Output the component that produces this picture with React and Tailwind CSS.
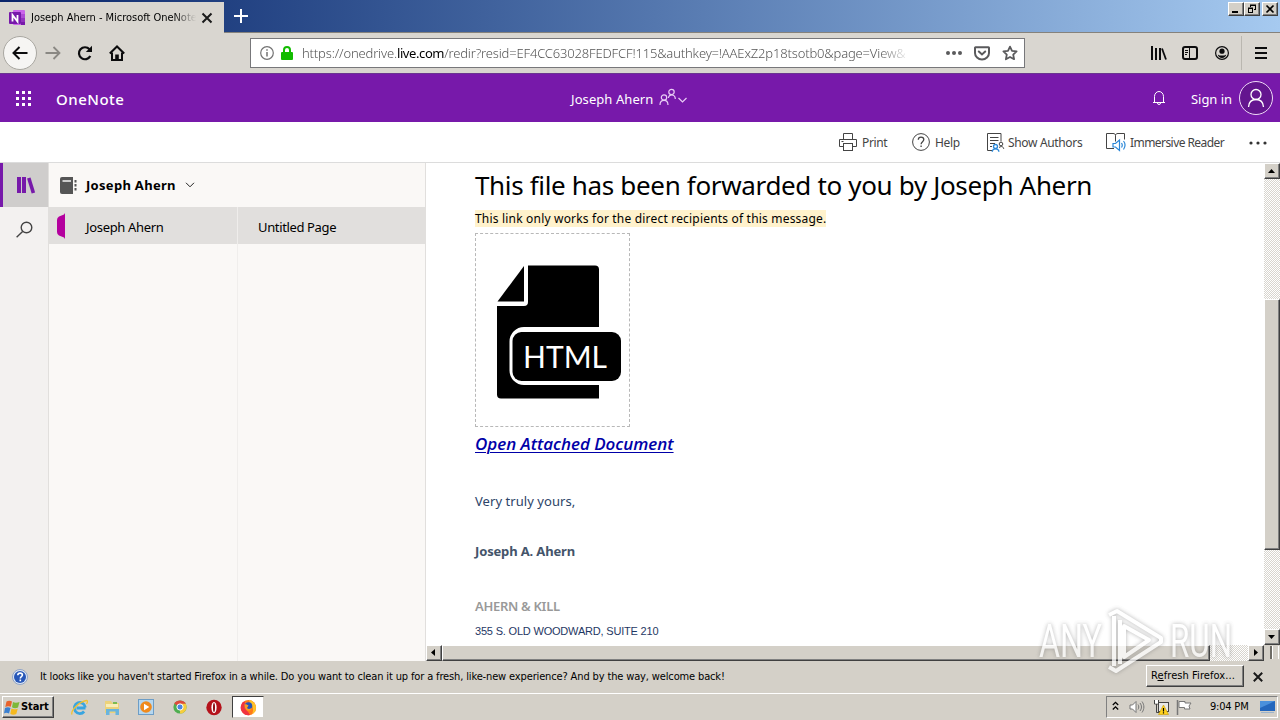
import clsx from "clsx";

const tahoma = "font-['DejaVu_Sans_Condensed','DejaVu_Sans','Noto_Sans',sans-serif]";
const segoe = "font-['Noto_Sans',sans-serif]";

const raised =
  "bg-[#d4d0c8] border border-t-white border-l-white border-r-[#404040] border-b-[#404040] shadow-[inset_-1px_-1px_0_#808080]";
const track =
  "bg-[repeating-conic-gradient(#ffffff_0%_25%,#d8d5ce_0%_50%)] bg-[length:2px_2px]";

function Label({ children, className }) {
  return <span className={clsx("block shrink-0 whitespace-nowrap", className)}>{children}</span>;
}

function Svg({ w, h, className, children }) {
  return (
    <svg
      width={w}
      height={h}
      viewBox={`0 0 ${w} ${h}`}
      fill="none"
      className={clsx("block shrink-0", className)}
    >
      {children}
    </svg>
  );
}

/* ---------- Browser chrome ---------- */

function OneNoteLogo() {
  return (
    <Svg w={17} h={16}>
      <rect x="4" y="0" width="12" height="15" rx="1" fill="#ca64ea" />
      <rect x="12" y="4" width="4" height="4" fill="#ae4bd5" />
      <rect x="12" y="8" width="4" height="4" fill="#9332bf" />
      <rect x="12" y="12" width="4" height="3" fill="#7719aa" />
      <rect x="0" y="2" width="12" height="12" rx="1" fill="#7719aa" />
      <path d="M3.500 11.500V5L8.500 11.500V5" stroke="#fff" strokeWidth="1.800" />
    </Svg>
  );
}

function WindowButtons() {
  return (
    <div className="flex pt-[2px] pr-[2px]">
      <div className={clsx("w-4 h-[14px]", raised)}>
        <Svg w={14} h={12}>
          <path d="M3 9h6" stroke="#000" strokeWidth="2" />
        </Svg>
      </div>
      <div className={clsx("w-4 h-[14px]", raised)}>
        <Svg w={14} h={12}>
          <path d="M5 2h6M5 2.500h6M5.500 2v2M10.500 2v5M9 6.500h2" stroke="#000" />
          <path d="M3 5.500h5M3 5h5M3.500 5v5M7.500 5v5M3 9.500h5" stroke="#000" />
        </Svg>
      </div>
      <div className={clsx("w-4 h-[14px] ml-[2px]", raised)}>
        <Svg w={14} h={12}>
          <path d="M3.500 2.500l7 7M10.500 2.500l-7 7" stroke="#000" strokeWidth="1.700" />
        </Svg>
      </div>
    </div>
  );
}

function TitleBar() {
  return (
    <div className="h-8 shrink-0 flex bg-linear-to-r from-[#0a246a] to-[#a6caf0]">
      <div className="w-[224px] h-[31px] mt-[2px] bg-[#d9d6d0] flex items-center pl-[9px] relative z-10">
        <OneNoteLogo />
        <div className="ml-[5px] w-[165px] overflow-hidden mask-[linear-gradient(to_right,#000_86%,transparent)]">
          <Label className={clsx(tahoma, "text-[11px] leading-4 text-black tracking-[-0.03px]")}>
            Joseph Ahern - Microsoft OneNote
          </Label>
        </div>
        <Svg w={12} h={12} className="ml-[5px]">
          <path d="M1.500 1.500l9 9M10.500 1.500l-9 9" stroke="#1a1a1a" strokeWidth="2" />
        </Svg>
      </div>
      <Svg w={14} h={14} className="ml-[10px] mt-[9px]">
        <path d="M7 0v14M0 7h14" stroke="#fff" strokeWidth="2" />
      </Svg>
      <div className="flex-1" />
      <WindowButtons />
    </div>
  );
}

function NavBar() {
  return (
    <div className="h-[41px] shrink-0 flex items-center bg-[#d9d6d0] border-t border-[#85827c]">
      <div className="ml-[3px] size-[34px] shrink-0 rounded-full bg-[#f6f5f3] border border-[#a9a7a1] flex items-center justify-center">
        <Svg w={16} h={14}>
          <path d="M15.500 7H2M7.500 1L1.500 7l6 6" stroke="#0c0c0d" strokeWidth="2" />
        </Svg>
      </div>
      <Svg w={16} h={14} className="ml-2">
        <path d="M.5 7H14M8.500 1l6 6-6 6" stroke="#8a8883" strokeWidth="1.800" />
      </Svg>
      <Svg w={16} h={16} className="ml-4">
        <path d="M13.300 11A6 6 0 1 1 12.500 4.300" stroke="#0c0c0d" strokeWidth="2.200" />
        <path d="M15 .8V7H8.800z" fill="#0c0c0d" />
      </Svg>
      <Svg w={16} h={16} className="ml-4">
        <path d="M.8 8.500L8 1.500l7.200 7" stroke="#0c0c0d" strokeWidth="2" />
        <path d="M3 7.500V15h10V7.500" stroke="#0c0c0d" strokeWidth="2" />
        <path d="M6.200 15V9.500h3.600V15z" fill="#0c0c0d" />
      </Svg>

      <div className="ml-[125px] w-[775px] h-[30px] shrink-0 bg-white border border-[#77777a] flex items-center">
        <Svg w={14} h={14} className="ml-[9px]">
          <circle cx="7" cy="7" r="6.300" stroke="#737373" strokeWidth="1.200" />
          <path d="M7 6v4.500M7 3.300v1.500" stroke="#737373" strokeWidth="1.500" />
        </Svg>
        <Svg w={12} h={14} className="ml-[7px]">
          <path d="M3 6V4a3 3 0 0 1 6 0v2" stroke="#12bc00" strokeWidth="2" />
          <rect x="0" y="6" width="12" height="8" rx="1" fill="#12bc00" />
        </Svg>
        <div className="ml-[9px] w-[608px] overflow-hidden mask-[linear-gradient(to_right,#000_95%,transparent)]">
          <Label className={clsx(segoe, "text-[13px] leading-5 font-light text-[#555] tracking-[-0.16px]")}>
            https://onedrive.
            <span className="text-black font-normal tracking-[-0.4px]">live.com</span>
            /redir?resid=EF4CC63028FEDFCF!115&amp;authkey=!AAExZ2p18tsotb0&amp;page=View&amp;
          </Label>
        </div>
        <Svg w={16} h={4} className="ml-[36px]">
          <circle cx="2" cy="2" r="2" fill="#5a5a5c" />
          <circle cx="8" cy="2" r="2" fill="#5a5a5c" />
          <circle cx="14" cy="2" r="2" fill="#5a5a5c" />
        </Svg>
        <Svg w={16} h={15} className="ml-3">
          <path d="M1.500 1.200h13a.5.500 0 0 1 .5.500V7a7 6.500 0 0 1-14 0V1.700a.5.500 0 0 1 .5-.5z" stroke="#5a5a5c" strokeWidth="2" />
          <path d="M4.800 5.500L8 8.500l3.200-3" stroke="#5a5a5c" strokeWidth="2" strokeLinecap="round" />
        </Svg>
        <Svg w={16} h={16} className="ml-3">
          <path d="M8 1.600l2 4.200 4.600.6-3.400 3.200.9 4.600L8 12l-4.100 2.200.9-4.600L1.400 6.400 6 5.800z" stroke="#5a5a5c" strokeWidth="1.800" strokeLinejoin="round" />
        </Svg>
      </div>

      <Svg w={16} h={14} className="ml-[126px]">
        <path d="M1 0v14M5 2v12M9 2v12" stroke="#0c0c0d" strokeWidth="2" />
        <path d="M11 2.500l4 11" stroke="#0c0c0d" strokeWidth="1.800" />
      </Svg>
      <Svg w={16} h={14} className="ml-[15px]">
        <rect x="1" y="1" width="14" height="12" rx="2" stroke="#0c0c0d" strokeWidth="2" />
        <path d="M7.500 1v12M3 4.500h3M3 6.500h3M3 8.500h2" stroke="#0c0c0d" />
      </Svg>
      <Svg w={14} h={14} className="ml-[17px]">
        <circle cx="7" cy="7" r="6.400" stroke="#0c0c0d" strokeWidth="1.200" />
        <circle cx="7" cy="5.200" r="2.600" fill="#0c0c0d" />
        <path d="M2.800 8.500c1 1 2.500 1 4.200 1s3.200 0 4.200-1c-.3 2-2 3.500-4.200 3.500s-3.900-1.500-4.200-3.500z" fill="#0c0c0d" />
      </Svg>
      <div className="w-px h-[34px] ml-3 bg-[#bab7b0]" />
      <Svg w={12} h={12} className="ml-[13px]">
        <path d="M0 1h12M0 6h12M0 11h12" stroke="#0c0c0d" strokeWidth="2" />
      </Svg>
    </div>
  );
}

/* ---------- OneNote ---------- */

function AppHeader() {
  return (
    <header className={clsx(segoe, "h-[49px] shrink-0 flex items-center bg-[#7719aa] border-t border-[#6a3590] text-white")}>
      <div className="ml-4 w-[15px] grid grid-cols-3 gap-[3px]">
        {Array.from({ length: 9 }, (_, i) => (
          <span key={i} className="size-[3px] bg-white" />
        ))}
      </div>
      <Label className="ml-[25px] mt-[2px] w-[100px] text-[15px] leading-5 font-medium tracking-[0.5px]">OneNote</Label>
      <Label className="ml-[415px] mt-[2px] w-[84px] text-[13px] leading-5 tracking-[0.08px]">Joseph Ahern</Label>
      <Svg w={28} h={18} className="ml-[4px] -mt-[3px]">
        <circle cx="5" cy="9.500" r="2.700" stroke="#e9cdf5" strokeWidth="1.200" />
        <path d="M1 17c0-3 1.500-4.600 4-4.600S9 14 9 17" stroke="#e9cdf5" strokeWidth="1.200" />
        <circle cx="12.500" cy="4" r="2.700" stroke="#e9cdf5" strokeWidth="1.200" />
        <path d="M9.300 10c.4-2 1.500-3 3.200-3 2.300 0 3.800 1.500 3.800 4" stroke="#e9cdf5" strokeWidth="1.200" />
        <path d="M19.500 10l4 4 4-4" stroke="#e9cdf5" strokeWidth="1.200" />
      </Svg>
      <Svg w={14} h={16} className="ml-[465px]">
        <path d="M1 12.500h12M2.500 12.500V6.500a4.500 5 0 0 1 9 0v6M5.500 13a1.500 1.500 0 0 0 3 0" stroke="#fff" />
      </Svg>
      <Label className="ml-[25px] mt-[2px] w-[48px] text-[13px] leading-5 tracking-[-0.05px]">Sign in</Label>
      <div className="size-[34px] shrink-0 rounded-full border border-[#efd9f7] bg-[#64158f] flex items-center justify-center">
        <Svg w={18} h={20}>
          <circle cx="9" cy="6.500" r="5" stroke="#fff" strokeWidth="1.300" />
          <path d="M1.500 19c.3-4.500 3-7.500 7.500-7.500s7.200 3 7.500 7.500" stroke="#fff" strokeWidth="1.300" />
        </Svg>
      </div>
    </header>
  );
}

function Toolbar() {
  const text = "mt-[2px] text-[12px] leading-5 text-[#444]";
  return (
    <div className={clsx(segoe, "h-[41px] shrink-0 flex items-center bg-white border-b border-[#dcdcdc]")}>
      <Svg w={18} h={18} className="ml-[839px]">
        <path d="M4.500 6V.5h9V6M4.500 13.500h-4V6.500h17v7h-4" stroke="#444" />
        <rect x="4.500" y="10.500" width="9" height="7" stroke="#444" />
        <path d="M2.500 8.500h2" stroke="#444" />
      </Svg>
      <Label className={clsx("ml-[5px] w-[50px] tracking-[-0.35px]", text)}>Print</Label>
      <Svg w={18} h={18}>
        <circle cx="9" cy="9" r="8.400" stroke="#444" />
        <path d="M6.300 6.800c0-1.600 1.100-2.700 2.700-2.700s2.800 1 2.800 2.500c0 2-2.700 2.200-2.700 4.700M9.100 12.500v1.600" stroke="#444" strokeWidth="1.300" />
      </Svg>
      <Label className={clsx("ml-[5px] w-[52px] tracking-[-0.3px]", text)}>Help</Label>
      <Svg w={18} h={19}>
        <path d="M5 17.500H.5V.5h13.500v8" stroke="#444" />
        <path d="M3 4.500h8.500M3 7.500h8.500M3 10.500h5M3 13.500h2" stroke="#444" />
        <circle cx="14" cy="11" r="1.800" stroke="#444" />
        <path d="M12 14.500c3-2 4.500-.5 4.700 1.500" stroke="#444" />
        <circle cx="8.500" cy="13.500" r="2" stroke="#2b88d8" strokeWidth="1.300" />
        <path d="M5.200 18.800c.2-4 6.500-4 6.700 0" stroke="#2b88d8" strokeWidth="1.300" />
      </Svg>
      <Label className={clsx("ml-[3px] w-[98px] tracking-[-0.34px]", text)}>Show Authors</Label>
      <Svg w={21} h={20}>
        <path d="M8 16.500H.5V1.500h6.500c1.500 0 2.500.6 2.500 2v6M9.500 3.500c0-1.400 1-2 2.500-2h6.500v6" stroke="#444" />
        <path d="M7 11.500h2.500l4-3.500v10.500l-4-3.500H7z" fill="#fff" stroke="#2b88d8" strokeWidth="1.200" />
        <path d="M15.500 11c1 1.500 1 3 0 4.500M17.500 9c2 2.500 2 5.500 0 8.500" stroke="#2b88d8" strokeWidth="1.200" />
      </Svg>
      <Label className={clsx("ml-[3px] w-[119px] tracking-[-0.56px]", text)}>Immersive Reader</Label>
      <Svg w={18} h={4} className="mt-[2px]">
        <circle cx="2" cy="2" r="1.600" fill="#333" />
        <circle cx="9" cy="2" r="1.600" fill="#333" />
        <circle cx="16" cy="2" r="1.600" fill="#333" />
      </Svg>
    </div>
  );
}

function Rail() {
  return (
    <nav className="w-[49px] shrink-0 bg-[#f3f1f0] border-r border-[#e1dfdd]">
      <div className="h-11 bg-[#cfcdcc] border-l-[3px] border-[#7719aa] flex items-center pl-[14px]">
        <Svg w={19} h={17}>
          <path d="M2 0v16M7 0v16" stroke="#7719aa" strokeWidth="4" />
          <path d="M11.800 1l4.600 15" stroke="#7719aa" strokeWidth="3.600" />
        </Svg>
      </div>
      <Svg w={17} h={17} className="ml-4 mt-[14px]">
        <circle cx="10.500" cy="6.500" r="5.300" stroke="#444" strokeWidth="1.400" />
        <path d="M6.600 10.400L.6 16.300" stroke="#444" strokeWidth="1.400" />
      </Svg>
    </nav>
  );
}

function NotebookPane() {
  return (
    <aside className={clsx(segoe, "w-[377px] shrink-0 flex flex-col bg-[#faf8f6] border-r border-[#e1dfdd] text-black")}>
      <div className="h-11 shrink-0 flex items-center pl-[11px]">
        <Svg w={17} h={17}>
          <path d="M2 0h11v17H2a2 2 0 0 1-2-2V2a2 2 0 0 1 2-2z" fill="#555" />
          <path d="M2.500 4h8.500" stroke="#fff" strokeWidth="1.400" />
          <path d="M15.500 3v12" stroke="#555" strokeWidth="2" strokeDasharray="2.500 1.500" />
        </Svg>
        <Label className="ml-[9px] w-[99px] text-[13px] leading-5 font-bold tracking-[0.3px]">Joseph Ahern</Label>
        <Svg w={10} h={6}>
          <path d="M1 .8l4 4 4-4" stroke="#222" />
        </Svg>
      </div>
      <div className="h-[37px] shrink-0 flex items-center bg-[#e1dfdd]">
        <div className="w-[189px] h-full flex items-center border-r border-[#efedeb] pl-2">
          <Svg w={8} h={26}>
            <path d="M8 0v26L7 24.500L2 22.500Q0 21.500 0 19V7Q0 4.500 2 3.500L7 1.500z" fill="#b4009e" />
          </Svg>
          <Label className="ml-[21px] mt-[2px] text-[13px] leading-5 tracking-[-0.33px]">Joseph Ahern</Label>
        </div>
        <Label className="ml-5 mt-[2px] text-[13px] leading-5 tracking-[-0.36px]">Untitled Page</Label>
      </div>
      <div className="flex-1 w-[189px] border-r border-[#f0eeec]" />
    </aside>
  );
}

function HtmlFileIcon() {
  return (
    <Svg w={126} h={134}>
      <path d="M27 1v35.500H.5z" fill="#000" />
      <path d="M31 .5h67a4 4 0 0 1 4 4V133.500H4a4 4 0 0 1-4-4V41h27a4 4 0 0 0 4-4z" fill="#000" />
      <rect x="15" y="64.500" width="114" height="53" rx="12" fill="#000" stroke="#fff" strokeWidth="5" />
      <path d="M102 60h30v80h-30z" fill="#fff" />
      <rect x="15.500" y="67" width="108.500" height="49" rx="9" fill="#000" />
      <text
        x="26"
        y="103"
        textLength="84"
        lengthAdjust="spacingAndGlyphs"
        fill="#fff"
        className="font-['Lato',sans-serif] text-[31px]"
      >
        HTML
      </text>
    </Svg>
  );
}

function PageContent() {
  return (
    <main className={clsx(segoe, "flex-1 overflow-hidden bg-white pl-[49px]")}>
      <Label className="mt-[4px] text-[26px] leading-9 text-black tracking-[-0.34px]">
        This file has been forwarded to you by Joseph Ahern
      </Label>
      <div className="mt-[7px] flex">
        <Label className="h-[17px] bg-[#fff2cc] text-[12px] leading-[17px] text-black tracking-[0.19px]">
          This link only works for the direct recipients of this message.
        </Label>
      </div>
      <div className="mt-[6px] w-[155px] h-[194px] border border-dashed border-[#b8b8b8] pl-[21px] pt-[31px]">
        <HtmlFileIcon />
      </div>
      <Label className="mt-[5px] font-['Open_Sans','Noto_Sans',sans-serif] text-[17px] leading-6 font-semibold italic text-[#0000a8] tracking-[-0.03px] underline underline-offset-2 decoration-1">
        Open Attached Document
      </Label>
      <Label className="mt-[35px] text-[13px] leading-5 text-[#2c4468] tracking-[0.06px]">Very truly yours,</Label>
      <Label className="mt-[30px] text-[13px] leading-5 font-bold text-[#44546a] tracking-[-0.15px]">Joseph A. Ahern</Label>
      <Label className="mt-[35px] text-[13px] leading-5 font-semibold text-[#999] tracking-[-0.3px]">AHERN &amp; KILL</Label>
      <Label className="mt-[5px] font-['Liberation_Sans',sans-serif] text-[11px] leading-5 text-[#1f3864] tracking-[-0.19px]">
        355 S. OLD WOODWARD, SUITE 210
      </Label>
    </main>
  );
}

function ScrollButton({ d }) {
  return (
    <div className={clsx("size-4 shrink-0", raised)}>
      <Svg w={14} h={14}>
        <path d={d} fill="#000" />
      </Svg>
    </div>
  );
}

function VerticalScrollbar() {
  return (
    <div className={clsx("w-4 flex flex-col shrink-0", track)}>
      <ScrollButton d="M3 9h7L6.500 5z" />
      <div className={clsx("mt-[120px] h-[251px] w-4", raised)} />
      <div className="flex-1" />
      <ScrollButton d="M3 5h7L6.500 9z" />
    </div>
  );
}

function HorizontalScrollbar() {
  return (
    <div className="h-4 shrink-0 flex">
      <div className={clsx("flex-1 flex", track)}>
        <ScrollButton d="M8 3v7L4 6.500z" />
        <div className={clsx("w-[768px] h-4", raised)} />
        <div className="flex-1" />
        <ScrollButton d="M5 3v7l4-3.500z" />
      </div>
      <div className="w-4 bg-[#d4d0c8] flex">
        <div className="ml-[6px] mt-px w-[2px] h-[13px] bg-[#6f6c66]" />
        <div className="mt-px w-px h-[13px] bg-white" />
        <div className="ml-[5px] mt-px w-px h-[13px] bg-white" />
      </div>
    </div>
  );
}

/* ---------- Bottom bars ---------- */

function NotificationBar() {
  return (
    <div className={clsx(tahoma, "h-8 shrink-0 flex items-center bg-[#d4d0c8] text-black")}>
      <Svg w={16} h={16} className="ml-3">
        <circle cx="8" cy="8" r="7.500" fill="#dfe7f3" stroke="#8fa3c6" />
        <circle cx="8" cy="8" r="6" fill="#2757b8" />
        <path d="M5.800 6.300c0-1.400 1-2.200 2.300-2.200s2.300.8 2.300 2c0 1.500-2.100 1.700-2.100 3.300M8.300 10.500v1.700" stroke="#fff" strokeWidth="1.600" />
      </Svg>
      <Label className="ml-[12px] w-[700px] text-[11px] leading-4 tracking-[-0.14px]">
        It looks like you haven't started Firefox in a while. Do you want to clean it up for a fresh, like-new
        experience? And by the way, welcome back!
      </Label>
      <div className="flex-1" />
      <div className={clsx("w-[98px] h-[22px] mb-[2px] pr-1 flex items-center justify-center", raised)}>
        <Label className="text-[11px] leading-4 tracking-[0.08px]">
          R<span className="underline underline-offset-1">e</span>fresh Firefox...
        </Label>
      </div>
      <Svg w={10} h={10} className="ml-[9px] mr-[17px]">
        <path d="M.8.8l8.400 8.400M9.200.8L.8 9.200" stroke="#1a1a1a" strokeWidth="2" />
      </Svg>
    </div>
  );
}

function WindowsFlag() {
  return (
    <Svg w={17} h={15}>
      <path d="M2.500 1.500C4 .5 6.500.5 8 1.500L6.800 6.800C5.500 6 3 6 1.300 7z" fill="#e8622c" />
      <path d="M9 2c1.500 1 4 1 6.500 0l-1.500 5.500c-2 1-4.500.8-6-.2z" fill="#7db83a" />
      <path d="M1 8c1.700-1 4-1 5.500 0L5 13.500c-1.500-1-4-1-5 0z" fill="#3a7fd0" />
      <path d="M7.500 8.500c1.500 1 4 1 6.200.2L12.300 14c-2 1-4.500.8-6-.2z" fill="#f5b91e" />
    </Svg>
  );
}

function QuickLaunch() {
  return (
    <>
      <Svg w={17} h={17} className="ml-[17px]">
        <path d="M14.500 9H5.500M14.300 8.500a5.500 5.500 0 1 0-1.200 4" stroke="#39a5e0" strokeWidth="2.800" />
        <path d="M1 15.500C-.5 12 8 2.500 15.500 1.500c1.500 0 1 2 0 3.500" stroke="#f2c230" strokeWidth="1.300" />
      </Svg>
      <Svg w={17} h={17} className="ml-4">
        <path d="M1 2h6l1.500 2H15v10H1z" fill="#ecd27a" />
        <path d="M2 5h12v3H2z" fill="#f8edb8" />
        <path d="M9 3h4v2H9z" fill="#7cba52" />
        <path d="M2 16V10h13v6h-3.500v-3.500H5.500V16z" fill="#69b4de" />
      </Svg>
      <Svg w={17} h={17} className="ml-[17px]">
        <rect x=".5" y=".5" width="15" height="15" fill="#b6d7ef" stroke="#6d9dc6" />
        <circle cx="8" cy="8" r="5.800" fill="#f08a1c" />
        <path d="M6 4.800v6.400L11.300 8z" fill="#fff" />
      </Svg>
      <Svg w={16} h={16} className="ml-[17px]">
        <circle cx="8" cy="8" r="6.600" fill="#4fae50" />
        <path d="M8 8L2.300 4.700A6.600 6.600 0 0 1 13.700 4.700z" fill="#de4a3c" />
        <path d="M8 8V4.700h5.700A6.600 6.600 0 0 1 8 14.600z" fill="#f7cd3c" />
        <circle cx="8" cy="8" r="3.100" fill="#4a86e0" stroke="#fff" />
      </Svg>
      <Svg w={17} h={17} className="ml-[17px]">
        <circle cx="9" cy="8.500" r="7.700" fill="#b5121b" />
        <ellipse cx="9" cy="8.500" rx="2.600" ry="5.500" fill="#fff" />
        <ellipse cx="9" cy="8.500" rx="1" ry="4.500" fill="#8e0e15" />
      </Svg>
      <div className="ml-[10px] w-8 h-[22px] bg-white border border-t-[#404040] border-l-[#404040] border-r-[#d4d0c8] border-b-[#d4d0c8] flex items-center justify-center">
        <Svg w={17} h={17}>
          <circle cx="8.500" cy="8.700" r="7.600" fill="#ff7a1a" />
          <path d="M9 .8c4 1 7 4 7 8a7.500 7.500 0 0 1-4 6.500c2-4 1-8-1.500-9.500z" fill="#ffc328" />
          <path d="M1.200 6C2 3 4 2 5 2.500L4.500 9l4 4.500 1.500 2.500A7.500 7.500 0 0 1 1.200 6z" fill="#f0333f" />
          <circle cx="8.500" cy="7" r="3.800" fill="#2554b8" />
          <path d="M4.500 5.500c2-.5 2.500.5 4 1L7 9c1.500 1.500 3.500 1 5-.5-.5 4.500-7.500 5-7.500-3z" fill="#ff9a1f" />
        </Svg>
      </div>
    </>
  );
}

function Tray() {
  return (
    <div className="w-[172px] h-[22px] mr-[2px] flex items-center border border-t-[#808080] border-l-[#808080] border-r-white border-b-white">
      <Svg w={7} h={10} className="ml-[5px] -mt-[2px]">
        <path d="M.8 4L3.500 1.300 6.200 4M.8 8.500l2.700-2.700 2.700 2.700" stroke="#000" strokeWidth="1.300" />
      </Svg>
      <Svg w={16} h={14} className="ml-[10px]">
        <path d="M1 5h2.500L7 1.500v11L3.500 9H1z" fill="#fff" stroke="#777" />
        <path d="M9 4.500c1 1.500 1 3.500 0 5M11 3c2 2.500 2 5.500 0 8M13 1.500c2.500 3.500 2.500 7.500 0 11" stroke="#777" />
      </Svg>
      <Svg w={16} h={16} className="ml-2">
        <rect x="5.500" y="3.500" width="10" height="9" fill="#e8e8e8" stroke="#444" />
        <path d="M1.500 1v4h4V1M3.500 5v8.500H8" stroke="#444" />
        <path d="M2 1h3v3.500H2z" fill="#fff" />
        <path d="M10.500 6l5 9.500h-10z" fill="#ffd21e" stroke="#c79a00" strokeWidth=".6" />
        <path d="M10.500 9v3.500M10.500 13.300v1.200" stroke="#000" strokeWidth="1.200" />
      </Svg>
      <Svg w={17} h={16} className="ml-[7px]">
        <path d="M1.500 1v15" stroke="#777" strokeWidth="1.500" />
        <path d="M3 2.500h6v1.500h6l-2 3 1 3H8.500V8.500H3z" fill="#fff" stroke="#777" />
      </Svg>
      <Label className="ml-[17px] w-[50px] text-[11px] leading-4 tracking-[-0.2px]">9:04 PM</Label>
      <Svg w={16} h={14}>
        <path d="M0 1h15v10H0z" fill="#2467bd" />
        <path d="M0 1h15L0 8z" fill="#4a90dc" />
        <path d="M1 12.500h13" stroke="#9db4cc" />
      </Svg>
    </div>
  );
}

function Taskbar() {
  return (
    <div className={clsx(tahoma, "h-[27px] shrink-0 flex items-center bg-[#d4d0c8] border-t border-white text-black")}>
      <div className={clsx("ml-[2px] w-[52px] h-[22px] flex items-center pl-px", raised)}>
        <WindowsFlag />
        <Label className="text-[11px] leading-4 font-bold tracking-[-0.1px]">Start</Label>
      </div>
      <QuickLaunch />
      <div className="flex-1" />
      <Tray />
    </div>
  );
}

function Watermark() {
  const text = "font-['Roboto',sans-serif] text-[46px]";
  return (
    <Svg
      w={200}
      h={70}
      className="absolute left-[1036px] top-[606px] overflow-visible opacity-75 drop-shadow-[0_0_2px_rgba(90,90,90,0.6)]"
    >
      <g fill="#fff">
        <text x="3" y="51" textLength="63" lengthAdjust="spacingAndGlyphs" className={text}>
          ANY
        </text>
        <text x="134" y="51" textLength="62" lengthAdjust="spacingAndGlyphs" className={text}>
          RUN
        </text>
      </g>
      <path d="M78 60V10M84 14v44" stroke="#fff" strokeWidth="4" />
      <path d="M73 9l8-4 44 27v4L80 65l-7-4" stroke="#fff" strokeWidth="4" strokeLinejoin="round" />
      <path d="M88 20l25 14-25 17z" stroke="#fff" strokeWidth="4" strokeLinejoin="round" />
    </Svg>
  );
}

export default function App() {
  return (
    <div className="relative w-[1280px] h-[720px] overflow-hidden flex flex-col bg-white">
      <TitleBar />
      <NavBar />
      <AppHeader />
      <Toolbar />
      <div className="h-[498px] shrink-0 flex">
        <Rail />
        <NotebookPane />
        <div className="flex-1 min-w-0 flex flex-col">
          <div className="flex-1 min-h-0 flex">
            <PageContent />
            <VerticalScrollbar />
          </div>
          <HorizontalScrollbar />
        </div>
      </div>
      <NotificationBar />
      <Taskbar />
      <Watermark />
    </div>
  );
}
